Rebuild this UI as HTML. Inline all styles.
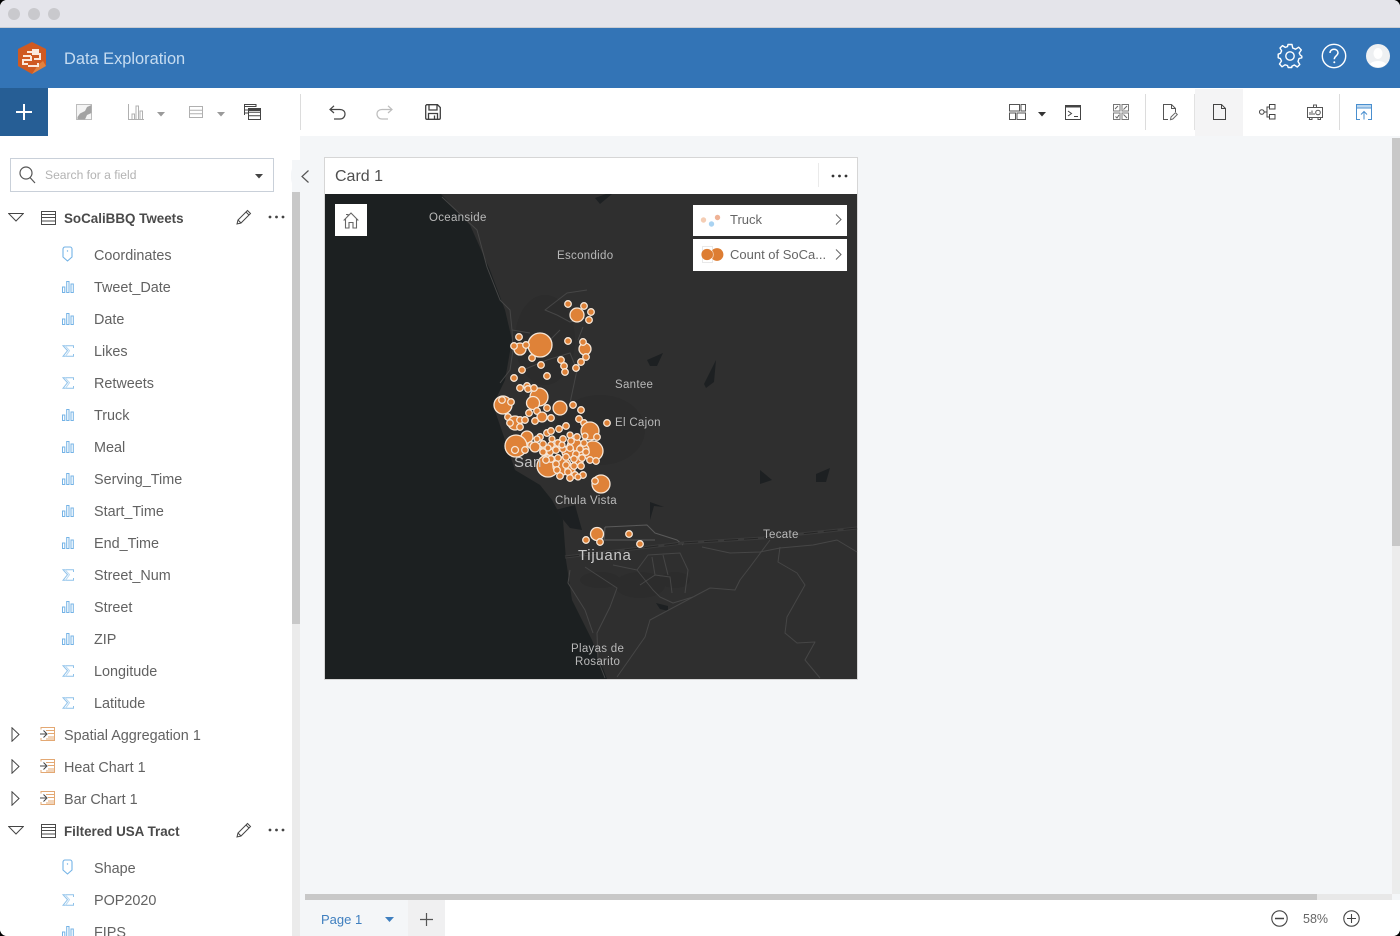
<!DOCTYPE html>
<html><head><meta charset="utf-8"><style>
html,body{margin:0;padding:0;background:#000;width:1400px;height:936px;overflow:hidden}
*{box-sizing:border-box}
#app{position:absolute;left:0;top:0;width:1400px;height:936px;background:#f4f6f8;border-radius:7px;overflow:hidden;font-family:"Liberation Sans",sans-serif;color:#626262}
.a{position:absolute}
.t{position:absolute;white-space:nowrap;font-size:14.4px;line-height:20px;margin-top:2px}
.n{margin-top:0}
.b{font-weight:bold;color:#4a4a4a;font-size:13.4px;margin-top:1px}
svg.i{position:absolute;overflow:visible;fill:none}
.ml{font-size:11.5px;fill:#b9b9b9;letter-spacing:.3px;font-family:"Liberation Sans",sans-serif}
</style></head><body><div id="app">
<div class="a" style="left:0;top:0;width:1400px;height:28px;background:#e4e4ea;border-bottom:1px solid #c9ccd2"></div>
<div class="a" style="left:8px;top:8px;width:12px;height:12px;border-radius:50%;background:#c9c9cd"></div>
<div class="a" style="left:28px;top:8px;width:12px;height:12px;border-radius:50%;background:#c9c9cd"></div>
<div class="a" style="left:48px;top:8px;width:12px;height:12px;border-radius:50%;background:#c9c9cd"></div>
<div class="a" style="left:0;top:28px;width:1400px;height:60px;background:#3374b6"></div>
<svg class="i" style="left:16px;top:41px" width="32" height="34" viewBox="0 0 32 34"><path d="M16 1L30 8V25L16 33L2 25V8Z" fill="#cf5a22"/><path d="M27 20L30 25L16 33L22 24Z" fill="#e0813f"/><path d="M7 15H15M15 15V19H7V23H12M11 11H22V9H17V13H24V18H18M12 25H22V22" stroke="#fbe9dc" stroke-width="2"/></svg>
<div class="t n" style="left:64px;top:48px;font-size:16.4px;line-height:22px;color:#c6dcf1">Data Exploration</div>
<svg class="i" style="left:1277px;top:43px" width="26" height="26" viewBox="0 0 26 26" stroke="#fff" stroke-width="1.4"><circle cx="13" cy="13" r="4.2"/><path d="M11 1.5H15L15.7 5L18.6 6.2L21.7 4.2L24.3 7L22.2 10L23.3 12.2L24.8 13.2V14.8L22 15.5L21 18.5L22.8 21.5L20.3 24L17.3 22L14.8 23.2L14.8 24.5H11.2L10.5 22.5L8 21.8L5 23.8L2.5 21L4.5 18L3.3 15.4L1.2 14.8V11.2L3.5 10.3L4.6 7.8L3 5L5.5 2.6L8.3 4.4L10.5 3.6Z" stroke-linejoin="round"/></svg>
<svg class="i" style="left:1321px;top:43px" width="26" height="26" viewBox="0 0 26 26"><circle cx="13" cy="13" r="11.7" stroke="#fff" stroke-width="1.4"/><path d="M9 10C9 7.5 11 6.2 13 6.2C15.3 6.2 17 7.8 17 9.8C17 12.6 13.3 13 13.3 16.2" stroke="#fff" stroke-width="1.5"/><circle cx="13.3" cy="19.2" r="1" fill="#fff"/></svg>
<svg class="i" style="left:1366px;top:44px" width="24" height="24" viewBox="0 0 24 24"><circle cx="12" cy="12" r="12" fill="#eef0f2"/><ellipse cx="12" cy="9.5" rx="4.5" ry="5.5" fill="#fff"/><path d="M4 20C7 16 17 16 20 20C17 24 7 24 4 20Z" fill="#fff"/></svg>

<div class="a" style="left:0;top:88px;width:1400px;height:48px;background:#fff"></div>
<div class="a" style="left:0;top:88px;width:48px;height:48px;background:#265e95"></div>
<svg class="i" style="left:16px;top:104px" width="16" height="16"><path d="M8 0V16M0 8H16" stroke="#fff" stroke-width="2"/></svg>
<svg class="i" style="left:76px;top:104px" width="16" height="16" viewBox="0 0 16 16"><path d="M.5.5H15.5V15.5H.5Z" fill="#f4f4f4" stroke="#bdbdbd"/><path d="M15.5 1L11 3L9 7L4 9.5L1.5 13V15.5H9L11 11L15.5 9Z" fill="#a3a3a3"/></svg>
<svg class="i" style="left:128px;top:104px" width="16" height="16" viewBox="0 0 16 16" stroke="#b0b0b0"><path d="M.5 0V15.5H16M4 15V10H6.5V15M8 15V2H10.5V15M12 15V7H14.5V15"/></svg>
<svg class="i" style="left:157px;top:112px" width="8" height="5"><path d="M0 0H8L4 4.5Z" fill="#9a9a9a"/></svg>
<svg class="i" style="left:189px;top:106px" width="14" height="12" viewBox="0 0 14 12" stroke="#b0b0b0"><path d="M.5.5H13.5V11.5H.5ZM.5 4.2H13.5M.5 7.8H13.5"/></svg>
<svg class="i" style="left:217px;top:112px" width="8" height="5"><path d="M0 0H8L4 4.5Z" fill="#9a9a9a"/></svg>
<svg class="i" style="left:244px;top:104px" width="17" height="16" viewBox="0 0 17 16" stroke="#444"><path d="M.5 11V.5H12V3M.5 2.5H12"/><path d="M.5 6H4M.5 9H4"/><path d="M4.5 4.5H16.5V15.5H4.5ZM4.5 8.2H16.5M4.5 11.8H16.5"/><path d="M4.5 4.5H16.5V6.5H4.5Z" fill="#444"/></svg>
<div class="a" style="left:300px;top:94px;width:1px;height:36px;background:#dcdcdc"></div>
<svg class="i" style="left:329px;top:105px" width="17" height="15" viewBox="0 0 17 15" stroke="#444" stroke-width="1.2"><path d="M5 .8L1 4.5L5 8M1 4.5H11C14 4.5 16 6.3 16 9C16 11.8 14 14 11 14H5"/></svg>
<svg class="i" style="left:376px;top:105px" width="17" height="15" viewBox="0 0 17 15" stroke="#bdbdbd" stroke-width="1.2"><path d="M12 .8L16 4.5L12 8M16 4.5H6C3 4.5 1 6.3 1 9C1 11.8 3 14 6 14H12"/></svg>
<svg class="i" style="left:425px;top:104px" width="16" height="16" viewBox="0 0 16 16" stroke="#3f3f3f" stroke-width="1.3"><path d="M1.7.7H12.5L15.3 3.5V14A1.3 1.3 0 0 1 14 15.3H2A1.3 1.3 0 0 1 .7 14V1.7ZM4 1V6H12V1M3.5 15V9.5H12.5V15M9.5 11.5V15"/></svg>

<svg class="i" style="left:1009px;top:104px" width="17" height="16" viewBox="0 0 17 16" stroke="#555"><path d="M.5.5H10.5V7H.5ZM12 .5H16.5V7H12ZM.5 9H6.5V15.5H.5ZM8 9H16.5V15.5H8Z"/></svg>
<svg class="i" style="left:1038px;top:112px" width="8" height="5"><path d="M0 0H8L4 4.5Z" fill="#333"/></svg>
<svg class="i" style="left:1065px;top:105px" width="16" height="15" viewBox="0 0 16 15" stroke="#444"><path d="M.5.5H15.5V14.5H.5Z"/><path d="M.5 1.5H15.5" stroke-width="2"/><path d="M3 6L6.5 8.5L3 11M9 11.5H13"/></svg>
<svg class="i" style="left:1113px;top:104px" width="16" height="16" viewBox="0 0 16 16" stroke="#777"><path d="M.5.5H7V7H.5ZM9 .5H15.5V7H9ZM.5 9H7V15.5H.5ZM9 9H15.5V15.5H9Z"/><path d="M2 5L5 2M10.5 5.5L14 2M2.5 12.5L4 14L6 11M10.5 10.5L14 14" stroke="#666"/></svg>
<div class="a" style="left:1145px;top:94px;width:1px;height:36px;background:#dcdcdc"></div>
<svg class="i" style="left:1163px;top:104px" width="15" height="17" viewBox="0 0 15 17" stroke="#555"><path d="M5 15.5H.5V.5H8.5L12.5 4.5V8M8.5.5V4.5H12.5"/><path d="M7.5 15.7L8 13L12.5 8.7L14.3 10.5L9.8 15Z" stroke="#666"/></svg>
<div class="a" style="left:1195px;top:89px;width:48px;height:47px;background:#f4f4f5"></div>
<div class="a" style="left:1194px;top:94px;width:1px;height:36px;background:#e2e2e2"></div>
<svg class="i" style="left:1213px;top:104px" width="13" height="16" viewBox="0 0 13 16" stroke="#444"><path d="M.5.5H8.5L12.5 4.5V15.5H.5ZM8.5.5V4.5H12.5"/></svg>
<svg class="i" style="left:1259px;top:104px" width="17" height="16" viewBox="0 0 17 16" stroke="#444"><circle cx="2.8" cy="8" r="2.3"/><path d="M10.5.5H16V5H10.5ZM10.5 10.5H16V15H10.5ZM5.1 8H8M10.5 3H8V13H10.5"/></svg>
<svg class="i" style="left:1307px;top:104px" width="16" height="17" viewBox="0 0 16 17" stroke="#555"><path d="M.5 3.5H15.5V13.5H.5ZM6.5 3.5V1H9.5V3.5M2.5 13.5V15.5H5V13.5M11 13.5V15.5H13.5V13.5M3 11V8M5 11V6.5M7 11V9"/><circle cx="11" cy="8.5" r="2.3"/></svg>
<div class="a" style="left:1339px;top:94px;width:1px;height:36px;background:#dcdcdc"></div>
<svg class="i" style="left:1356px;top:104px" width="16" height="16" viewBox="0 0 16 16" stroke="#4a8fcf"><path d="M4 15.5H.5V.5H15.5V15.5H12M.5 4H15.5M8 15.5V7.5M5 10.5L8 7.5L11 10.5"/><path d="M1 2.2H15" stroke-width="2.4" stroke="#bcd8f0"/></svg>

<div class="a" style="left:0;top:136px;width:292px;height:800px;background:#fff"></div>
<div class="a" style="left:292px;top:136px;width:8px;height:24px;background:#fff"></div>
<div class="a" style="left:292px;top:192px;width:8px;height:744px;background:#ebebeb"></div>
<div class="a" style="left:292px;top:192px;width:8px;height:432px;background:#c8c8c8"></div>
<div class="a" style="left:291px;top:160px;width:24px;height:32px;background:#f4f6f8;border-radius:14px 0 0 14px"></div>
<svg class="i" style="left:301px;top:170px" width="8" height="13"><path d="M7.5.5L1 6.5L7.5 12.5" stroke="#555" stroke-width="1.2"/></svg>
<div class="a" style="left:10px;top:158px;width:264px;height:34px;border:1px solid #c9d0d9;background:#fff"></div>
<svg class="i" style="left:19px;top:166px" width="17" height="18" stroke="#555" stroke-width="1.2"><circle cx="7" cy="7" r="6"/><path d="M11 11.5L16 17"/></svg>
<div class="t n" style="left:45px;top:165px;font-size:12.1px;color:#b3b3b3">Search for a field</div>
<svg class="i" style="left:255px;top:174px" width="8" height="5"><path d="M0 0H8L4 4.5Z" fill="#444"/></svg>

<svg width="0" height="0" style="position:absolute"><defs>
<symbol id="pin" viewBox="0 0 11 16"><path d="M1 3A2 2 0 0 1 3 1H8A2 2 0 0 1 10 3V11L5.5 15L1 11Z" fill="none" stroke="#74b3e6" stroke-width="1.1" stroke-linejoin="round"/><circle cx="5.5" cy="5" r=".7" fill="#74b3e6"/></symbol>
<symbol id="bar" viewBox="0 0 12 12"><path d="M.5 11.5V6H2.8V11.5ZM4.7 11.5V.5H7V11.5ZM9 11.5V3H11.3V11.5Z" fill="none" stroke="#74b3e6"/></symbol>
<symbol id="sig" viewBox="0 0 12 12"><path d="M11.5 3V.7H1L5.5 5.7L1 11.3H11.5V9" fill="none" stroke="#8fc2ea"/><path d="M3 .7L7.5 5.7L3.5 11.3" fill="none" stroke="#b9d9f2"/></symbol>
<symbol id="tbl" viewBox="0 0 15 14"><path d="M.5.5H14.5V13.5H.5ZM.5 3.5H14.5M.5 6.5H14.5M.5 10H14.5" fill="none" stroke="#4a4a4a"/></symbol>
<symbol id="agg" viewBox="0 0 15 14"><path d="M1 2.5V.5H14.5V13.5H1V11M6 3.5H14M8 6.5H14M8 10H14M6 12H14" fill="none" stroke="#e3a873"/><path d="M0 7H6M3.5 3.5L7 7L3.5 10.5" fill="none" stroke="#444"/></symbol>
<symbol id="down" viewBox="0 0 16 9"><path d="M.7.5H15.3L8 8Z" fill="none" stroke="#444"/></symbol>
<symbol id="right" viewBox="0 0 9 15"><path d="M1 .8V14.2L8 7.5Z" fill="none" stroke="#444"/></symbol>
<symbol id="pen" viewBox="0 0 16 16"><path d="M1 15L2 11L11.5 1.5L14.5 4.5L5 14ZM10 3L13 6M2 11L5 14" fill="none" stroke="#444"/></symbol>
</defs></svg>

<svg class="i" style="left:8px;top:213px" width="16" height="9"><use href="#down"/></svg>
<svg class="i" style="left:41px;top:211px" width="15" height="14"><use href="#tbl"/></svg>
<div class="t b" style="left:64px;top:208px">SoCaliBBQ Tweets</div>
<svg class="i" style="left:236px;top:209px" width="16" height="16"><use href="#pen"/></svg>
<svg class="i" style="left:268px;top:215px" width="17" height="4"><circle cx="2" cy="2" r="1.4" fill="#444"/><circle cx="8.5" cy="2" r="1.4" fill="#444"/><circle cx="15" cy="2" r="1.4" fill="#444"/></svg>

<svg class="i" style="left:62px;top:246px" width="11" height="16"><use href="#pin"/></svg><div class="t" style="left:94px;top:244px">Coordinates</div>
<svg class="i" style="left:62px;top:281px" width="12" height="12"><use href="#bar"/></svg><div class="t" style="left:94px;top:276px">Tweet_Date</div>
<svg class="i" style="left:62px;top:313px" width="12" height="12"><use href="#bar"/></svg><div class="t" style="left:94px;top:308px">Date</div>
<svg class="i" style="left:62px;top:345px" width="12" height="12"><use href="#sig"/></svg><div class="t" style="left:94px;top:340px">Likes</div>
<svg class="i" style="left:62px;top:377px" width="12" height="12"><use href="#sig"/></svg><div class="t" style="left:94px;top:372px">Retweets</div>
<svg class="i" style="left:62px;top:409px" width="12" height="12"><use href="#bar"/></svg><div class="t" style="left:94px;top:404px">Truck</div>
<svg class="i" style="left:62px;top:441px" width="12" height="12"><use href="#bar"/></svg><div class="t" style="left:94px;top:436px">Meal</div>
<svg class="i" style="left:62px;top:473px" width="12" height="12"><use href="#bar"/></svg><div class="t" style="left:94px;top:468px">Serving_Time</div>
<svg class="i" style="left:62px;top:505px" width="12" height="12"><use href="#bar"/></svg><div class="t" style="left:94px;top:500px">Start_Time</div>
<svg class="i" style="left:62px;top:537px" width="12" height="12"><use href="#bar"/></svg><div class="t" style="left:94px;top:532px">End_Time</div>
<svg class="i" style="left:62px;top:569px" width="12" height="12"><use href="#sig"/></svg><div class="t" style="left:94px;top:564px">Street_Num</div>
<svg class="i" style="left:62px;top:601px" width="12" height="12"><use href="#bar"/></svg><div class="t" style="left:94px;top:596px">Street</div>
<svg class="i" style="left:62px;top:633px" width="12" height="12"><use href="#bar"/></svg><div class="t" style="left:94px;top:628px">ZIP</div>
<svg class="i" style="left:62px;top:665px" width="12" height="12"><use href="#sig"/></svg><div class="t" style="left:94px;top:660px">Longitude</div>
<svg class="i" style="left:62px;top:697px" width="12" height="12"><use href="#sig"/></svg><div class="t" style="left:94px;top:692px">Latitude</div>

<svg class="i" style="left:11px;top:727px" width="9" height="15"><use href="#right"/></svg><svg class="i" style="left:40px;top:727px" width="15" height="14"><use href="#agg"/></svg><div class="t" style="left:64px;top:724px">Spatial Aggregation 1</div>
<svg class="i" style="left:11px;top:759px" width="9" height="15"><use href="#right"/></svg><svg class="i" style="left:40px;top:759px" width="15" height="14"><use href="#agg"/></svg><div class="t" style="left:64px;top:756px">Heat Chart 1</div>
<svg class="i" style="left:11px;top:791px" width="9" height="15"><use href="#right"/></svg><svg class="i" style="left:40px;top:791px" width="15" height="14"><use href="#agg"/></svg><div class="t" style="left:64px;top:788px">Bar Chart 1</div>

<svg class="i" style="left:8px;top:826px" width="16" height="9"><use href="#down"/></svg>
<svg class="i" style="left:41px;top:824px" width="15" height="14"><use href="#tbl"/></svg>
<div class="t b" style="left:64px;top:821px">Filtered USA Tract</div>
<svg class="i" style="left:236px;top:822px" width="16" height="16"><use href="#pen"/></svg>
<svg class="i" style="left:268px;top:828px" width="17" height="4"><circle cx="2" cy="2" r="1.4" fill="#444"/><circle cx="8.5" cy="2" r="1.4" fill="#444"/><circle cx="15" cy="2" r="1.4" fill="#444"/></svg>
<svg class="i" style="left:62px;top:859px" width="11" height="16"><use href="#pin"/></svg><div class="t" style="left:94px;top:857px">Shape</div>
<svg class="i" style="left:62px;top:894px" width="12" height="12"><use href="#sig"/></svg><div class="t" style="left:94px;top:889px">POP2020</div>
<svg class="i" style="left:62px;top:926px" width="12" height="12"><use href="#bar"/></svg><div class="t" style="left:94px;top:921px">FIPS</div>

<div class="a" style="left:1392px;top:138px;width:8px;height:756px;background:#ececec"></div>
<div class="a" style="left:1392px;top:138px;width:8px;height:408px;background:#c8c8c8"></div>
<div class="a" style="left:305px;top:894px;width:1087px;height:6px;background:#e8e8e8"></div>
<div class="a" style="left:305px;top:894px;width:1012px;height:6px;background:#c8c8c8"></div>
<div class="a" style="left:408px;top:900px;width:992px;height:36px;background:#fff"></div>
<div class="a" style="left:408px;top:900px;width:37px;height:36px;background:#f0f0f1"></div>
<div class="t n" style="left:321px;top:910px;font-size:13px;color:#3f7fbf">Page 1</div>
<svg class="i" style="left:385px;top:917px" width="9" height="5"><path d="M0 0H9L4.5 5Z" fill="#3f7fbf"/></svg>
<svg class="i" style="left:420px;top:913px" width="13" height="13"><path d="M6.5 0V13M0 6.5H13" stroke="#555" stroke-width="1.2"/></svg>
<svg class="i" style="left:1271px;top:910px" width="17" height="17" stroke="#444" stroke-width="1.1"><circle cx="8.5" cy="8.5" r="7.7"/><path d="M4 8.5H13" stroke-width="1.4"/></svg>
<div class="t n" style="left:1303px;top:909px;font-size:12.5px;color:#666">58%</div>
<svg class="i" style="left:1343px;top:910px" width="17" height="17" stroke="#444" stroke-width="1.1"><circle cx="8.5" cy="8.5" r="7.7"/><path d="M4 8.5H13M8.5 4V13"/></svg>

<div class="a" style="left:324px;top:157px;width:534px;height:523px;border:1px solid #d6d6d6;background:#fff"></div>
<div class="t n" style="left:335px;top:166px;font-size:16px;line-height:22px;color:#4f4f4f">Card 1</div>
<div class="a" style="left:818px;top:163px;width:1px;height:24px;background:#eaeaea"></div>
<svg class="i" style="left:831px;top:174px" width="17" height="4"><circle cx="2" cy="2" r="1.4" fill="#333"/><circle cx="8.5" cy="2" r="1.4" fill="#333"/><circle cx="15" cy="2" r="1.4" fill="#333"/></svg>

<svg class="i" style="left:325px;top:194px;fill:none;filter:blur(.35px)" width="532" height="485" viewBox="325 194 532 485">
<rect x="325" y="194" width="532" height="485" fill="#1c2021"/>
<path d="M441 194L470 225L490 270L505 310L512 340L505 380L493 405L505 440L515 470L540 485L552 500L563 520L566 560L572 600L592 640L607 679H857V194Z" fill="#2f2f2f"/>
<g fill="#1d2022"><path d="M555 510L575 505L582 530L570 528Z"/><path d="M647 360L663 353L657 366L650 366Z"/><path d="M704 384L716 360L714 382L706 388Z"/><path d="M650 502V520L654 506L664 507Z"/><path d="M760 470L772 480L760 484Z"/><path d="M816 474L830 468L826 482L816 482Z"/><path d="M656 603L668 606L668 611L660 609Z"/><path d="M595 198L606 194H612L600 204Z"/></g>
<g fill="#2c2c2c"><ellipse cx="545" cy="340" rx="30" ry="45"/><ellipse cx="600" cy="430" rx="45" ry="35"/><ellipse cx="600" cy="580" rx="20" ry="8"/><ellipse cx="640" cy="585" rx="25" ry="13"/><ellipse cx="675" cy="580" rx="15" ry="8"/></g>
<g stroke="#464646" stroke-width="1" stroke-linejoin="round">
<path d="M442 197L477 230L487 267L500 300L510 310L512 330L513 350L510 370L500 383"/>
<path d="M587 290L567 293L545 310L557 315L570 322L590 317M583 327L578 340M512 330L530 333M523 370L547 360L570 353L577 370L570 403M560 330L545 345"/>
<path d="M605 527L647 525L655 533L677 540L683 545M604 540H655M605 527L604 540" stroke="#5a5a5a"/>
<path d="M702 547L730 553L760 552L780 548L813 545L837 540L857 552"/>
<path d="M770 540L750 567L740 580L735 590L710 588L693 597L650 620L645 637L617 677"/>
<path d="M780 547L778 562L797 573L805 585L787 617L785 633L797 643L815 642L805 660L820 678"/>
<path d="M570 570L568 583L585 610L593 633"/>
<path d="M585 567L617 588L610 607L597 633L598 660L605 678"/>
<path d="M637 570L653 590L660 597L673 603L693 597M637 570L648 555L680 553L688 570L685 593M652 557L655 575L670 577L672 593M663 555L668 575M613 565L637 570M655 575L640 585"/>
</g>
<path d="M565 557L683 543L763 538L857 528" stroke="#3b3b3b" stroke-width="3"/>
<path d="M565 557L683 543L763 538L857 528" stroke="#252525" stroke-width="1" stroke-dasharray="14 6"/>
<g fill="#df8238" stroke="#f6e6d6" stroke-width="1.3">
<circle cx="540" cy="345" r="12"/><circle cx="577" cy="315" r="7"/><circle cx="568" cy="304" r="3.3"/><circle cx="584" cy="306" r="3.3"/><circle cx="591" cy="312" r="3.3"/><circle cx="589" cy="320" r="3.3"/>
<circle cx="520" cy="349" r="6"/><circle cx="519" cy="337" r="3.3"/><circle cx="514" cy="346" r="3.3"/><circle cx="526" cy="345" r="3.3"/><circle cx="532" cy="358" r="3.3"/><circle cx="568" cy="341" r="3.3"/>
<circle cx="585" cy="349" r="6"/><circle cx="583" cy="342" r="3.3"/><circle cx="586" cy="357" r="3.3"/><circle cx="581" cy="362" r="3.3"/><circle cx="576" cy="368" r="3.3"/><circle cx="561" cy="360" r="3.3"/><circle cx="564" cy="366" r="3.3"/><circle cx="565" cy="372" r="3.3"/><circle cx="541" cy="365" r="3.3"/><circle cx="522" cy="370" r="3.3"/><circle cx="514" cy="378" r="3.3"/><circle cx="547" cy="376" r="3.3"/>
<circle cx="539" cy="397" r="9"/><circle cx="520" cy="388" r="3.3"/><circle cx="527" cy="386" r="3.3"/><circle cx="528" cy="389" r="3.3"/><circle cx="534" cy="388" r="3.3"/><circle cx="533" cy="403" r="6.5"/><circle cx="503" cy="405" r="9"/><circle cx="502" cy="400" r="3.3"/><circle cx="511" cy="402" r="3.3"/><circle cx="573" cy="405" r="3.3"/><circle cx="560" cy="408" r="7"/><circle cx="581" cy="410" r="3.3"/><circle cx="547" cy="408" r="3.3"/><circle cx="529" cy="413" r="3.3"/><circle cx="537" cy="411" r="3.3"/><circle cx="542" cy="417" r="5"/><circle cx="551" cy="418" r="3.3"/><circle cx="535" cy="421" r="3.3"/><circle cx="508" cy="417" r="3.3"/>
<circle cx="515" cy="423" r="7"/><circle cx="510" cy="423" r="3.3"/><circle cx="520" cy="420" r="3.3"/><circle cx="525" cy="420" r="3.3"/><circle cx="520" cy="427" r="3.3"/><circle cx="579" cy="419" r="3.3"/><circle cx="584" cy="423" r="3.3"/><circle cx="566" cy="426" r="3.3"/><circle cx="559" cy="429" r="3.3"/><circle cx="607" cy="423" r="3.3"/>
<circle cx="590" cy="431" r="9"/><circle cx="527" cy="437" r="6"/><circle cx="516" cy="446" r="11"/><circle cx="515" cy="450" r="3.5"/><circle cx="525" cy="450" r="3.3"/><circle cx="531" cy="445" r="3.3"/><circle cx="593" cy="451" r="10"/><circle cx="597" cy="437" r="3.3"/><circle cx="535" cy="447" r="5"/>
<circle cx="548" cy="466" r="11"/><circle cx="562" cy="466" r="9"/><circle cx="575" cy="447" r="8"/><circle cx="568" cy="452" r="6"/><circle cx="555" cy="448" r="5"/><circle cx="583" cy="450" r="6"/><circle cx="578" cy="462" r="5"/><circle cx="570" cy="470" r="5"/><circle cx="545" cy="450" r="4.5"/>
<circle cx="540" cy="437" r="3.3"/><circle cx="547" cy="433" r="3.3"/><circle cx="551" cy="431" r="3.3"/><circle cx="543" cy="444" r="3.3"/><circle cx="551" cy="445" r="3.3"/><circle cx="558" cy="443" r="3.3"/><circle cx="563" cy="439" r="3.3"/><circle cx="571" cy="441" r="3.3"/><circle cx="577" cy="437" r="3.3"/><circle cx="584" cy="443" r="3.3"/><circle cx="580" cy="449" r="3.3"/><circle cx="586" cy="452" r="3.3"/><circle cx="543" cy="452" r="3.3"/><circle cx="550" cy="452" r="3.3"/><circle cx="556" cy="450" r="3.3"/><circle cx="563" cy="449" r="3.3"/><circle cx="570" cy="448" r="3.3"/><circle cx="576" cy="454" r="3.3"/><circle cx="582" cy="458" r="3.3"/><circle cx="590" cy="460" r="3.3"/><circle cx="596" cy="461" r="3.3"/><circle cx="574" cy="459" r="3.3"/><circle cx="566" cy="457" r="3.3"/><circle cx="558" cy="458" r="3.3"/><circle cx="551" cy="459" r="3.3"/><circle cx="546" cy="460" r="3.3"/><circle cx="556" cy="464" r="3.3"/><circle cx="566" cy="465" r="3.3"/><circle cx="574" cy="466" r="3.3"/><circle cx="581" cy="466" r="3.3"/><circle cx="557" cy="470" r="3.3"/><circle cx="568" cy="472" r="3.3"/><circle cx="575" cy="475" r="3.3"/><circle cx="583" cy="475" r="3.3"/><circle cx="560" cy="476" r="3.3"/><circle cx="570" cy="478" r="3.3"/><circle cx="578" cy="477" r="3"/><circle cx="552" cy="439" r="3"/><circle cx="570" cy="435" r="3"/><circle cx="585" cy="436" r="3"/><circle cx="562" cy="445" r="3"/><circle cx="548" cy="448" r="3"/><circle cx="537" cy="439" r="3"/>
<circle cx="601" cy="484" r="9"/><circle cx="595" cy="481" r="3.3"/>
<circle cx="597" cy="534" r="6.5"/><circle cx="586" cy="540" r="3.3"/><circle cx="600" cy="542" r="3.3"/><circle cx="629" cy="534" r="3.3"/><circle cx="640" cy="544" r="3.3"/>
</g>
<text x="429" y="221" class="ml">Oceanside</text><text x="557" y="259" class="ml">Escondido</text><text x="615" y="388" class="ml">Santee</text><text x="615" y="426" class="ml">El Cajon</text><text x="555" y="504" class="ml">Chula Vista</text><text x="763" y="538" class="ml">Tecate</text><text x="571" y="652" class="ml">Playas de</text><text x="575" y="665" class="ml">Rosarito</text>
<text x="514" y="467" class="ml" style="font-size:15px;fill:#c4c4c4">San</text>
<text x="578" y="560" class="ml" style="font-size:15px;fill:#c9c9c9;letter-spacing:.7px">Tijuana</text>
</svg>

<div class="a" style="left:335px;top:204px;width:32px;height:32px;background:#fff"></div>
<svg class="i" style="left:343px;top:212px" width="16" height="17" viewBox="0 0 16 17" stroke="#666" stroke-width="1.1"><path d="M.7 8.5L8 1L15.3 8.5M2.5 7V16H6V10.5H10V16H13.5V7M3 2.5H5V4"/></svg>
<div class="a" style="left:693px;top:205px;width:154px;height:31px;background:#fff"></div>
<div class="a" style="left:693px;top:239px;width:154px;height:32px;background:#fff"></div>
<svg class="i" style="left:700px;top:212px" width="22" height="16"><circle cx="3.5" cy="8" r="2.7" fill="#f4cdb4"/><circle cx="11.5" cy="12" r="2.7" fill="#a9d3f2"/><circle cx="17.5" cy="5.5" r="2.7" fill="#efb295"/></svg>
<div class="t" style="left:730px;top:208px;font-size:13px;color:#666">Truck</div>
<svg class="i" style="left:835px;top:214px" width="7" height="11"><path d="M1 .5L6 5.5L1 10.5" stroke="#666"/></svg>
<svg class="i" style="left:700px;top:245px" width="24" height="19"><rect x="2.5" y="1.5" width="10" height="16" fill="none" stroke="#e8e8e8"/><circle cx="17" cy="9.5" r="6.4" fill="#dd7d33"/><circle cx="7" cy="9.5" r="5.6" fill="#dd7d33"/><path d="M12 5.5A6.4 6.4 0 0 1 12 13.5" stroke="#f4d3b8" stroke-width=".8"/></svg>
<div class="t n" style="left:730px;top:245px;font-size:13px;color:#666">Count of SoCa...</div>
<svg class="i" style="left:835px;top:249px" width="7" height="11"><path d="M1 .5L6 5.5L1 10.5" stroke="#666"/></svg>
</div></body></html>
